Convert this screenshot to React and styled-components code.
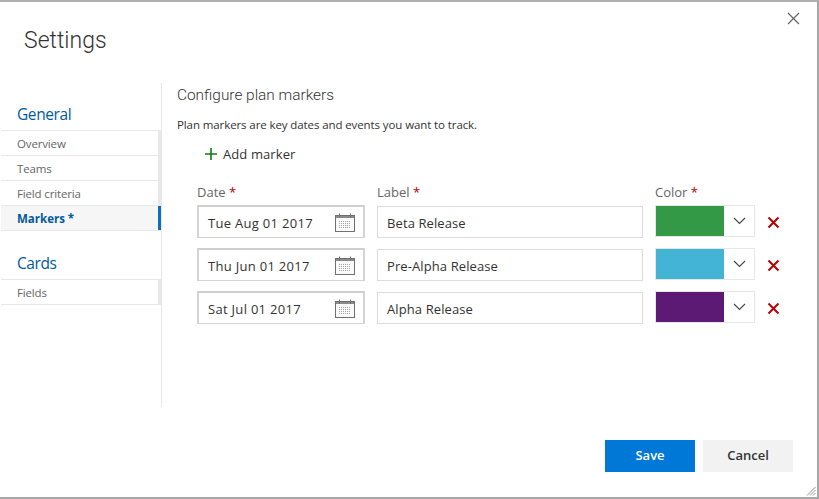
import React from 'react'
import styled, { createGlobalStyle } from 'styled-components'

const GlobalStyle = createGlobalStyle`
    html, body { margin: 0; padding: 0; background: #fff; }
    body { font-family: "Open Sans", "Noto Sans", "Liberation Sans", sans-serif; }
`

const Dialog = styled.div`
    position: relative;
    width: 819px;
    height: 499px;
    box-sizing: border-box;
    background: #fff;
    border-top: 2px solid #b0b0b0;
    border-right: 2px solid #a8a8a8;
    border-bottom: 2px solid #a8a8a8;
    overflow: hidden;
`

const Header = styled.div`
    display: flex;
    justify-content: space-between;
    height: 81px;
`

const Title = styled.h1`
    margin: 22px 0 0 24px;
    font-family: Roboto, "Open Sans", sans-serif;
    font-size: 23px;
    line-height: 34px;
    font-weight: 300;
    color: #333;
`

const CloseButton = styled.div`
    margin: 10px 17px 0 0;
    width: 13px;
    height: 13px;
    display: flex;
`

const Body = styled.div`
    display: flex;
    height: 324px;
`

const Sidebar = styled.nav`
    width: 161px;
    border-right: 1px solid #e6e6e6;
    padding-top: 20px;
    flex-shrink: 0;
`

const Group = styled.div`
    margin-bottom: 21px;
`

const GroupTitle = styled.div`
    height: 27px;
    line-height: 23px;
    margin-left: 1px;
    padding-left: 16px;
    font-size: 15.5px;
    letter-spacing: -0.4px;
    color: #005a9e;
    border-bottom: 1px solid #e8e8e8;
`

const NavItem = styled.div`
    position: relative;
    height: 24px;
    line-height: 25px;
    margin-left: 1px;
    padding-left: 16px;
    font-size: 11.5px;
    letter-spacing: ${p => (p.$active ? '0' : '-0.15px')};
    font-weight: ${p => (p.$active ? 700 : 400)};
    color: ${p => (p.$active ? '#005a9e' : '#666')};
    background: ${p => (p.$active ? '#f6f6f6' : '#fff')};
    border-bottom: 1px solid #e8e8e8;
    &::after {
        content: '';
        position: absolute;
        top: 0;
        right: 0;
        bottom: 0;
        width: 3px;
        background: ${p => (p.$active ? '#106ebe' : '#e8e8e8')};
    }
`

const Main = styled.main`
    flex: 1;
    padding: 1px 0 0 15px;
`

const SectionTitle = styled.h2`
    margin: 0;
    font-family: Roboto, "Open Sans", sans-serif;
    font-size: 15.4px;
    line-height: 22px;
    font-weight: 300;
    color: #333;
`

const Description = styled.p`
    margin: 11px 0 0;
    font-size: 11.5px;
    line-height: 16px;
    letter-spacing: -0.1px;
    color: #333;
`

const AddMarker = styled.div`
    display: flex;
    align-items: center;
    gap: 6px;
    margin: 11px 0 0 28px;
    height: 20px;
    font-size: 13px;
    letter-spacing: 0.1px;
    color: #333;
`

const Grid = styled.div`
    display: grid;
    grid-template-columns: 168px 266px 100px 36px;
    column-gap: 12px;
    row-gap: 11px;
    margin: 20px 0 0 20px;
`

const ColumnLabel = styled.div`
    height: 16px;
    margin-bottom: -5px;
    font-size: 13px;
    line-height: 16px;
    color: #666;
    & b {
        color: #b00000;
        font-weight: 400;
    }
`

const DateField = styled.div`
    box-sizing: border-box;
    height: 33px;
    margin-top: -1px;
    display: flex;
    align-items: center;
    justify-content: space-between;
    padding: 1px 8px 0 9px;
    border: 1px solid #d4d4d4;
    border-top: 2px solid #cfcfcf;
    border-left: 2px solid #d4d4d4;
    border-right: 2px solid #d4d4d4;
    font-size: 13px;
    letter-spacing: 0.3px;
    color: #333;
`

const TextField = styled.div`
    box-sizing: border-box;
    height: 32px;
    display: flex;
    align-items: center;
    padding: 2px 0 0 9px;
    border: 1px solid #dcdcdc;
    font-size: 13px;
    letter-spacing: 0.1px;
    color: #333;
`

const ColorField = styled.div`
    box-sizing: border-box;
    height: 32px;
    margin-top: -1px;
    display: flex;
    border: 1px solid #e6e6e6;
`

const Swatch = styled.div`
    width: 68px;
    background: ${p => p.$color};
`

const Chevron = styled.div`
    flex: 1;
    display: flex;
    align-items: center;
    justify-content: center;
`

const RemoveCell = styled.div`
    display: flex;
    align-items: center;
`

const Footer = styled.div`
    display: flex;
    justify-content: flex-end;
    gap: 8px;
    padding: 33px 24px 0 0;
`

const Button = styled.button`
    width: 90px;
    height: 32px;
    border: none;
    padding: 0 0 2px;
    font-family: inherit;
    font-size: 13px;
    font-weight: 600;
    color: ${p => (p.$primary ? '#fff' : '#333')};
    background: ${p => (p.$primary ? '#0078d7' : '#f2f2f2')};
`

const Grip = styled.svg`
    position: absolute;
    right: 1px;
    bottom: 1px;
`

const CalendarIcon = () => (
    <svg width="20" height="20" viewBox="0 0 20 20">
        <rect x="0.5" y="2.5" width="19" height="16" fill="#fafafa" stroke="#707070" />
        <rect x="1" y="3" width="18" height="2" fill="#8a8a8a" />
        <path d="M4.5 0.5v4M15.5 0.5v4" stroke="#707070" />
        <path d="M4 8.5h12M4 10.5h12M4 12.5h12M4 14.5h12" stroke="#a4a4a4" strokeDasharray="1 1" />
    </svg>
)

const RemoveIcon = () => (
    <svg width="13" height="13" viewBox="0 0 13 13">
        <path d="M1.5 1.5l10 10M11.5 1.5l-10 10" stroke="#b80000" strokeWidth="2" fill="none" />
    </svg>
)

const ChevronIcon = () => (
    <svg width="13" height="8" viewBox="0 0 13 8">
        <path d="M1 1l5.5 5.5L12 1" stroke="#444" strokeWidth="1.1" fill="none" />
    </svg>
)

const generalItems = ['Overview', 'Teams', 'Field criteria']

const markers = [
    { date: 'Tue Aug 01 2017', label: 'Beta Release', color: '#339947' },
    { date: 'Thu Jun 01 2017', label: 'Pre-Alpha Release', color: '#43b4d5' },
    { date: 'Sat Jul 01 2017', label: 'Alpha Release', color: '#5c1a74' }
]

const App = () => (
    <Dialog>
        <GlobalStyle />
        <Header>
            <Title>Settings</Title>
            <CloseButton>
                <svg width="13" height="13" viewBox="0 0 13 13">
                    <path d="M1 1l11 11M12 1L1 12" stroke="#666" strokeWidth="1.2" fill="none" />
                </svg>
            </CloseButton>
        </Header>
        <Body>
            <Sidebar>
                <Group>
                    <GroupTitle>General</GroupTitle>
                    {generalItems.map(el => <NavItem key={el}>{el}</NavItem>)}
                    <NavItem $active>Markers *</NavItem>
                </Group>
                <Group>
                    <GroupTitle>Cards</GroupTitle>
                    <NavItem>Fields</NavItem>
                </Group>
            </Sidebar>
            <Main>
                <SectionTitle>Configure plan markers</SectionTitle>
                <Description>Plan markers are key dates and events you want to track.</Description>
                <AddMarker>
                    <svg width="12" height="12" viewBox="0 0 12 12">
                        <path d="M6 0v12M0 6h12" stroke="#107c10" strokeWidth="1.6" fill="none" />
                    </svg>
                    Add marker
                </AddMarker>
                <Grid>
                    <ColumnLabel>Date <b>*</b></ColumnLabel>
                    <ColumnLabel>Label <b>*</b></ColumnLabel>
                    <ColumnLabel>Color <b>*</b></ColumnLabel>
                    <div />
                    {markers.map(el => (
                        <React.Fragment key={el.label}>
                            <DateField>{el.date}<CalendarIcon /></DateField>
                            <TextField>{el.label}</TextField>
                            <ColorField>
                                <Swatch $color={el.color} />
                                <Chevron><ChevronIcon /></Chevron>
                            </ColorField>
                            <RemoveCell><RemoveIcon /></RemoveCell>
                        </React.Fragment>
                    ))}
                </Grid>
            </Main>
        </Body>
        <Footer>
            <Button $primary>Save</Button>
            <Button>Cancel</Button>
        </Footer>
        <Grip width="10" height="10" viewBox="0 0 10 10">
            <path d="M9.5 1L1 9.5M9.5 4L4 9.5M9.5 7L7 9.5" stroke="#909090" />
        </Grip>
    </Dialog>
)

export default App
